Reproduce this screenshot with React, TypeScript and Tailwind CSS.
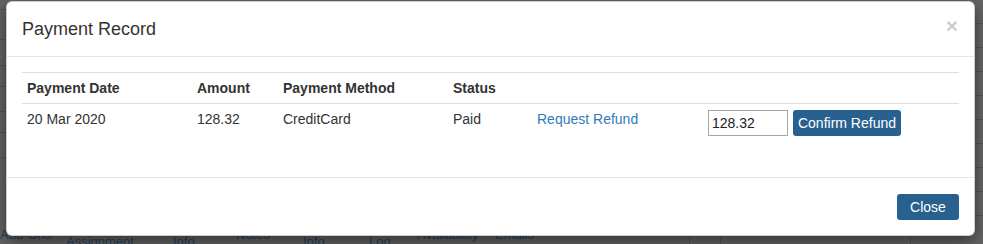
const TABS = [
  { label: 'Add-Ons', x: 'w-[66px]', mt: 'mt-[0px]' },
  { label: 'Assignment', x: 'w-[107px]', mt: 'mt-[7px]' },
  { label: 'Info', x: 'w-[63px]', mt: 'mt-[7px]' },
  { label: 'Notes', x: 'w-[67px]', mt: 'mt-[0px]' },
  { label: 'Info', x: 'w-[66px]', mt: 'mt-[7px]' },
  { label: 'Log', x: 'w-[48px]', mt: 'mt-[7px]' },
  { label: 'Availability', x: 'w-[78px]', mt: 'mt-[0px]' },
  { label: 'Emails', x: 'w-[60px]', mt: 'mt-[0px]' },
]

const COLS = [
  { label: 'Payment Date', w: 'w-[170px]' },
  { label: 'Amount', w: 'w-[86px]' },
  { label: 'Payment Method', w: 'w-[170px]' },
  { label: 'Status', w: 'w-[84px]' },
  { label: '', w: 'w-[171px]' },
  { label: '', w: '' },
]

export default function App() {
  return (
    <div className="relative h-[244px] w-[983px] overflow-hidden bg-[#656565] font-['Liberation_Sans',Arial,sans-serif] text-[14px] text-[#333]">
      {/* Backdrop: dimmed page behind the modal */}
      <div className="flex h-[227px]">
        <div className="flex w-[8px] flex-col">
          <div className="h-[10px] border-b border-[#555]" />
          <div className="h-[30px] border-b border-[#555]" />
          <div className="h-[26px] border-b border-[#555]" />
          <div className="h-[21px] border-b border-[#555]" />
          <div className="h-[25px] border-b border-[#555]" />
          <div className="h-[21px] border-b border-[#555]" />
          <div className="h-[25px] border-b border-[#555]" />
        </div>
        <div className="flex-1" />
        <div className="flex w-[10px] flex-col">
          {Array.from({ length: 9 }).map((_, i) => (
            <div key={i} className="h-[24px] border-b border-[#555]" />
          ))}
        </div>
      </div>
      <div className="flex h-[17px] text-[13px] leading-[15px] text-[#24415e]">
        {TABS.map((t, i) => (
          <div key={i} className={`${t.x} ${t.mt} shrink-0 whitespace-nowrap`}>
            {t.label}
          </div>
        ))}
        <div className="ml-[134px] h-full border-l border-[#555]" />
        <div className="ml-[30px] h-full border-l border-[#555]" />
        <div className="ml-[189px] h-full border-l border-[#555]" />
      </div>

      {/* Modal */}
      <div className="absolute left-[6px] top-[1px] w-[969px] rounded-[6px] border border-black/20 bg-white shadow-[0_5px_15px_rgba(0,0,0,0.5)]">
        <div className="flex items-start justify-between border-b border-[#e5e5e5] p-[15px]">
          <h4 className="text-[18px] leading-[24px] text-[#333]">Payment Record</h4>
          <button className="mt-[-2px] pr-[1px] text-[21px] font-bold leading-[21px] text-black opacity-20">
            ×
          </button>
        </div>

        <div className="p-[15px]">
          <table className="mb-[21px] w-full border-collapse">
            <thead>
              <tr className="border-t border-b border-[#ddd]">
                {COLS.map((c, i) => (
                  <th key={i} className={`${c.w} p-[5px] text-left font-bold leading-[20px]`}>
                    {c.label}
                  </th>
                ))}
              </tr>
            </thead>
            <tbody>
              <tr>
                <td className="px-[5px] pt-[5px] pb-[5px] align-top leading-[20px]">20 Mar 2020</td>
                <td className="px-[5px] pt-[5px] pb-[5px] align-top leading-[20px]">128.32</td>
                <td className="px-[5px] pt-[5px] pb-[5px] align-top leading-[20px]">CreditCard</td>
                <td className="px-[5px] pt-[5px] pb-[5px] align-top leading-[20px]">Paid</td>
                <td className="px-[5px] pt-[5px] pb-[5px] align-top leading-[20px]">
                  <a className="text-[#337ab7]">Request Refund</a>
                </td>
                <td className="px-[5px] pt-[6px] pb-[5px] align-top">
                  <div className="flex items-center">
                    <input
                      defaultValue="128.32"
                      className="h-[26px] w-[80px] border border-[#a6a6a6] px-[3px] text-[14px] text-[#222] outline-none"
                    />
                    <button className="ml-[5px] h-[26px] w-[108px] rounded-[3px] bg-[#286090] text-[14px] text-white">
                      Confirm Refund
                    </button>
                  </div>
                </td>
              </tr>
            </tbody>
          </table>
        </div>

        <div className="flex justify-end border-t border-[#e5e5e5] p-[15px] pt-[16px]">
          <button className="h-[26px] w-[62px] rounded-[3px] bg-[#286090] text-[14px] text-white">
            Close
          </button>
        </div>
      </div>
    </div>
  )
}
